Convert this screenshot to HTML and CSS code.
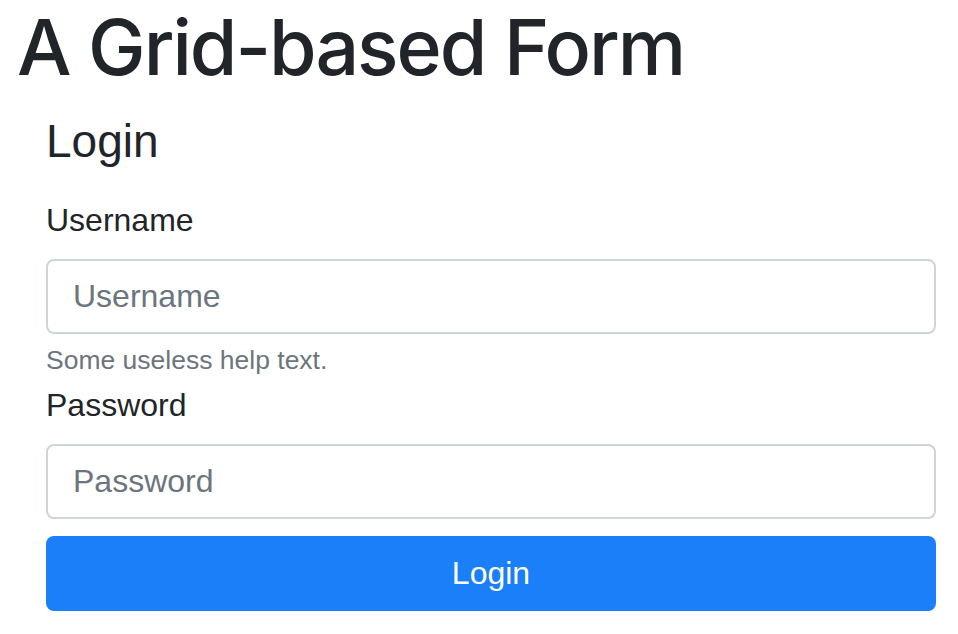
FILE: index.html
```html
<!DOCTYPE html>
<html lang="en">
<head>
    <meta charset="UTF-8">
    <meta name="viewport" content="width=device-width, initial-scale=1.0">
    <title>A Grid-based Form</title>
    <link rel="stylesheet" href="styles.css">
</head>
<body>
    <h1 class="page-title">A Grid-based Form</h1>

    <form class="login-form">
        <h3 class="form-title">Login</h3>

        <div class="field">
            <label for="username" class="field-label">Username</label>
            <input type="text" id="username" class="field-input" placeholder="Username">
            <small class="field-help">Some useless help text.</small>
        </div>

        <div class="field">
            <label for="password" class="field-label">Password</label>
            <input type="password" id="password" class="field-input" placeholder="Password">
        </div>

        <button type="submit" class="btn-login">Login</button>
    </form>
</body>
</html>
```

FILE: styles.css
```css
body {
    font-family: "Liberation Sans", Arial, sans-serif;
    color: #212529;
    margin: 0;
    padding: 0 17px;
    background: #fff;
}

.page-title {
    font-family: Inter, "Liberation Sans", sans-serif;
    font-size: 77px;
    font-weight: 500;
    letter-spacing: -2px;
    line-height: 94px;
    margin: 0;
}

.login-form {
    display: flex;
    flex-direction: column;
    width: 890px;
    margin: 20px 0 0 29px;
}

.form-title {
    font-size: 46px;
    font-weight: 400;
    line-height: 1.2;
    margin: 0 0 27px 0;
}

.field {
    display: flex;
    flex-direction: column;
}

.field-label {
    font-size: 32px;
    line-height: 48px;
    margin-bottom: 15px;
}

.field-input {
    height: 75px;
    box-sizing: border-box;
    border: 2px solid #ced4da;
    border-radius: 8px;
    padding: 0 25px;
    font-family: inherit;
    font-size: 32px;
    color: #212529;
}

.field-input::placeholder {
    color: #6c757d;
}

.field-help {
    font-size: 26.5px;
    line-height: 40px;
    color: #6c757d;
    margin: 6px 0 1px 0;
}

.btn-login {
    height: 75px;
    margin-top: 17px;
    border: none;
    border-radius: 8px;
    background-color: #1a7ff9;
    color: #fff;
    font-family: inherit;
    font-size: 32px;
}
```
